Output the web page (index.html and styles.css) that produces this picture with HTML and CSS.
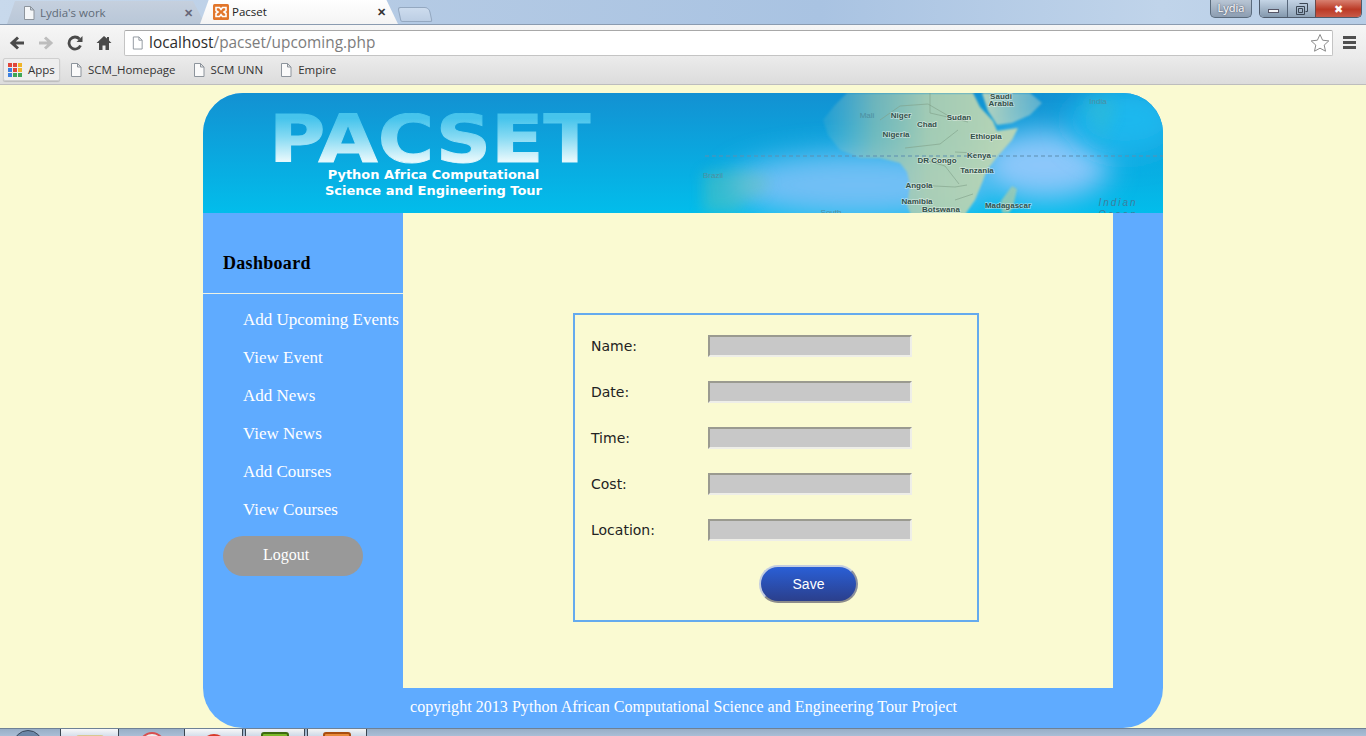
FILE: index.html
```html
<!DOCTYPE html>
<html lang="en">
<head>
<meta charset="utf-8">
<title>Pacset</title>
<link rel="stylesheet" href="styles.css">
</head>
<body>
<div class="browser">
  <div class="tabstrip">
    <div class="tab tab-inactive">
      <svg class="page-icon" viewBox="0 0 14 16"><path d="M2.5 1.500h6l3.500 3.500v9.500h-9.500z M8.500 1.500v3.500h3.500" fill="#f4f6f8" stroke="#8d949c"/></svg>
      <span class="tab-title">Lydia's work</span>
      <span class="tab-x">✕</span>
    </div>
    <div class="tab tab-active">
      <svg class="xampp" viewBox="0 0 16 16"><rect width="16" height="16" rx="1.500" fill="#e2762b"/><path d="M3 3.500h3.500l1.500 2 1.500-2h3.500v3l-2 1.500 2 1.500v3h-3.500l-1.500-2-1.500 2h-3.500v-3l2-1.500-2-1.500z" fill="none" stroke="#fff" stroke-width="1.600"/></svg>
      <span class="tab-title tab-title-on">Pacset</span>
      <span class="tab-x tab-x-on">✕</span>
    </div>
    <div class="tab-new"></div>
    <div class="win-group">
      <div class="user-chip">Lydia</div>
      <div class="win-buttons">
        <div class="win-btn win-min"><span class="min-bar"></span></div>
        <div class="win-btn win-max"><svg viewBox="0 0 12 12" class="max-icon"><path d="M3.500 .5h8v8h-2 M.5 3.500h8v8h-8z M2.500 5.500h4v4h-4z" fill="none" stroke="#3b4654"/></svg></div>
        <div class="win-btn win-close">✖</div>
      </div>
    </div>
  </div>
  <div class="toolbar">
    <svg class="nav" viewBox="0 0 16 16"><path d="M15 8H4M9 2.500L3 8l6 5.500" fill="none" stroke="#4a4a4a" stroke-width="3"/></svg>
    <svg class="nav" viewBox="0 0 16 16"><path d="M1 8h11M7 2.500L13 8l-6 5.500" fill="none" stroke="#bdbdbd" stroke-width="3"/></svg>
    <svg class="nav" viewBox="0 0 16 16"><path d="M13.500 10.500A6 6 0 1 1 12.500 4" fill="none" stroke="#4a4a4a" stroke-width="2.800"/><path d="M9.500 7h6V1z" fill="#4a4a4a"/></svg>
    <svg class="nav" viewBox="0 0 16 16"><path d="M8 1L0.500 8H3v7h3.500v-4.500h3V15H13V8h2.500L13 5.500V2h-2v1.500z" fill="#4a4a4a"/></svg>
    <div class="omnibox">
      <svg class="page-icon omni-icon" viewBox="0 0 14 16"><path d="M2.500 1.500h6l3.500 3.500v9.500h-9.500z M8.500 1.500v3.500h3.500" fill="#fff" stroke="#8d949c"/></svg>
      <span class="url"><span class="url-host">localhost</span>/pacset/upcoming.php</span>
      <svg class="star" viewBox="0 0 20 20"><path d="M10 1.500l2.600 5.700 6.200.7-4.600 4.200 1.300 6.100L10 15.200l-5.500 3 1.300-6.100L1.200 7.900l6.200-.7z" fill="#fff" stroke="#8a8a8a"/></svg>
    </div>
    <div class="menu"><span></span><span></span><span></span></div>
  </div>
  <div class="bookmarks">
    <div class="bm-apps">
      <div class="apps-grid">
        <i class="r"></i><i class="r"></i><i class="y"></i>
        <i class="b"></i><i class="r"></i><i class="y"></i>
        <i class="b"></i><i class="g"></i><i class="g"></i>
      </div>
      <span>Apps</span>
    </div>
    <div class="bm"><svg class="page-icon" viewBox="0 0 14 16"><path d="M2.500 1.500h6l3.500 3.500v9.500h-9.500z M8.500 1.500v3.500h3.500" fill="#fafafa" stroke="#8d949c"/></svg>SCM_Homepage</div>
    <div class="bm"><svg class="page-icon" viewBox="0 0 14 16"><path d="M2.500 1.500h6l3.500 3.500v9.500h-9.500z M8.500 1.500v3.500h3.500" fill="#fafafa" stroke="#8d949c"/></svg>SCM UNN</div>
    <div class="bm"><svg class="page-icon" viewBox="0 0 14 16"><path d="M2.500 1.500h6l3.500 3.500v9.500h-9.500z M8.500 1.500v3.500h3.500" fill="#fafafa" stroke="#8d949c"/></svg>Empire</div>
  </div>
</div>

<div class="page">
  <div class="site">
    <header class="banner">
      <svg class="map" viewBox="203 93 960 120" preserveAspectRatio="none">
        <defs>
          <filter id="soft" x="-40%" y="-60%" width="180%" height="220%"><feGaussianBlur stdDeviation="14"/></filter>
          <filter id="softer" x="-30%" y="-30%" width="160%" height="160%"><feGaussianBlur stdDeviation="7"/></filter>
          <filter id="edge" x="-10%" y="-10%" width="120%" height="120%"><feGaussianBlur stdDeviation="1"/></filter>
          <linearGradient id="land" gradientUnits="userSpaceOnUse" x1="820" x2="1000" y1="0" y2="0">
            <stop offset="0" stop-color="#8cc4c4" stop-opacity=".1"/>
            <stop offset=".3" stop-color="#9cc6b0" stop-opacity=".65"/>
            <stop offset=".6" stop-color="#aecfb2" stop-opacity=".92"/>
            <stop offset="1" stop-color="#bcd6b4" stop-opacity=".95"/>
          </linearGradient>
          <linearGradient id="arabia" gradientUnits="userSpaceOnUse" x1="980" x2="1050" y1="0" y2="0">
            <stop offset="0" stop-color="#c3d8ba" stop-opacity=".95"/>
            <stop offset="1" stop-color="#b4d4cc" stop-opacity=".35"/>
          </linearGradient>
        </defs>
        <ellipse cx="860" cy="185" rx="130" ry="32" fill="#72bff5" filter="url(#soft)"/>
        <ellipse cx="1045" cy="165" rx="65" ry="34" fill="#8cc7fa" filter="url(#soft)"/>
        <ellipse cx="1125" cy="120" rx="55" ry="35" fill="#1fb8ee" filter="url(#soft)"/>
        <path d="M703 172l40-2 27 8-6 14-20 10-8 11h-33z" fill="#6cc4ae" opacity=".4" filter="url(#softer)"/>
        <path d="M1083 98l30 0 3 14-8 14-5 16-10-20-10-14z" fill="#3fbcc4" opacity=".35" filter="url(#softer)"/>
        <path d="M823 120l12-15 12-12h126l7 14 13 14 4 10 21-3-6 12-15 17-10 13-5 13-7 17-9 13-3 15H920l-7-8-6-15 3-20-3-13-7-9-20-5-20 0-20-8-12-15z" fill="url(#land)" filter="url(#edge)"/>
        <path d="M982 93h48l12 10-12 12-18 8-15 2-9-14z" fill="url(#arabia)" filter="url(#edge)"/>
        <path d="M1012 186l5 3-4 18-4 6h-7l-1-12z" fill="#9dcbb0" opacity=".85" filter="url(#edge)"/>
        <path d="M880 120l20-14 28-2 24 14 16 4M905 148l35-4 18-14M925 160l20 6 14 18M915 185l40 2 12-2M930 93v20l22 5M955 152l20 1M955 200l18-6" fill="none" stroke="#7f9f88" stroke-width=".6"/>
        <path d="M705 156H1163" fill="none" stroke="#5c8eb0" stroke-width="1" stroke-dasharray="4 3"/>
        <g class="map-labels">
          <text x="1001" y="99" text-anchor="middle">Saudi</text>
          <text x="1001" y="106" text-anchor="middle">Arabia</text>
          <text x="867" y="118" text-anchor="middle" class="faint">Mali</text>
          <text x="901" y="118" text-anchor="middle">Niger</text>
          <text x="927" y="127" text-anchor="middle">Chad</text>
          <text x="959" y="120" text-anchor="middle">Sudan</text>
          <text x="896" y="137" text-anchor="middle">Nigeria</text>
          <text x="986" y="139" text-anchor="middle">Ethiopia</text>
          <text x="937" y="163" text-anchor="middle">DR Congo</text>
          <text x="979" y="158" text-anchor="middle">Kenya</text>
          <text x="977" y="173" text-anchor="middle">Tanzania</text>
          <text x="919" y="188" text-anchor="middle">Angola</text>
          <text x="917" y="204" text-anchor="middle">Namibia</text>
          <text x="941" y="212" text-anchor="middle">Botswana</text>
          <text x="1008" y="208" text-anchor="middle">Madagascar</text>
          <text x="1098" y="104" text-anchor="middle" class="faint">India</text>
          <text x="713" y="178" text-anchor="middle" class="faint">Brazil</text>
          <text x="831" y="215" text-anchor="middle" class="faint">South</text>
          <text x="1118" y="206" text-anchor="middle" class="ocean">Indian</text>
          <text x="1118" y="218" text-anchor="middle" class="ocean">Ocean</text>
        </g>
      </svg>
      <div class="logo">
        <div class="logo-word">PACSET</div>
        <div class="logo-sub">Python Africa Computational<br>Science and Engineering Tour</div>
      </div>
    </header>

    <div class="middle">
      <aside class="sidebar">
        <h2 class="side-title">Dashboard</h2>
        <nav class="side-nav">
          <a class="side-link">Add Upcoming Events</a>
          <a class="side-link">View Event</a>
          <a class="side-link">Add News</a>
          <a class="side-link">View News</a>
          <a class="side-link">Add Courses</a>
          <a class="side-link">View Courses</a>
        </nav>
        <a class="logout">Logout</a>
      </aside>
      <main class="content">
        <form class="event-form">
          <div class="field"><label class="field-label">Name:</label><div class="field-input"></div></div>
          <div class="field"><label class="field-label">Date:</label><div class="field-input"></div></div>
          <div class="field"><label class="field-label">Time:</label><div class="field-input"></div></div>
          <div class="field"><label class="field-label">Cost:</label><div class="field-input"></div></div>
          <div class="field"><label class="field-label">Location:</label><div class="field-input"></div></div>
          <div class="form-actions"><div class="save">Save</div></div>
        </form>
      </main>
    </div>

    <footer class="site-footer">copyright 2013 Python African Computational Science and Engineering Tour Project</footer>
  </div>
</div>

<div class="taskbar">
  <div class="orb"></div>
  <div class="task task-a"><i class="ti ti-folder"></i></div>
  <div class="task task-b"><i class="ti ti-ring"></i></div>
  <div class="task task-a"><i class="ti ti-red"></i></div>
  <div class="task task-c"><i class="ti ti-green"></i></div>
  <div class="task task-c"><i class="ti ti-orange"></i></div>
</div>
</body>
</html>
```
FILE: styles.css
```css
* { box-sizing: border-box; }
html, body { margin: 0; height: 736px; overflow: hidden; }
body { background: #fafad2; font-family: "Liberation Serif", serif; display: flex; flex-direction: column; }

/* Browser frame */
.browser { height: 85px; flex: none; font-family: "Open Sans", "Liberation Sans", sans-serif; background: #e4e4e4; }
.tabstrip { height: 25px; display: flex; align-items: flex-end; padding-left: 7px; background: linear-gradient(90deg, #c8d9ec 0%, #b4cae4 30%, #a9c3e2 60%, #c0d4ea 85%, #b7cde6 100%); border-bottom: 1px solid #8a9bb0; }
.tab { height: 23px; width: 198px; display: flex; align-items: center; margin-right: -5px; clip-path: polygon(0 100%, 8px 0, 186px 0, 198px 100%); padding-left: 15px; flex: none; }
.tab-inactive { background: linear-gradient(#c5d0de, #b9c7d8); }
.tab-active { background: linear-gradient(#fff, #f4f4f4); height: 25px; padding-left: 13px; width: 198px; clip-path: polygon(0 100%, 9px 0, 186px 0, 198px 100%); position: relative; }
.page-icon { width: 14px; height: 16px; flex: none; }
.tab-title { font-size: 11.500px; color: #5f6b78; margin-left: 4px; width: 144px; }
.tab-title-on { font-size: 11.500px; color: #222; margin-left: 3px; width: 145px; }
.xampp { width: 16px; height: 16px; flex: none; }
.tab-x { font-size: 11px; color: #667; font-weight: bold; }
.tab-x-on { color: #333; }
.tab-new { width: 32px; height: 15px; margin: 0 0 2px 6px; background: linear-gradient(#cddcee, #bccee4); border: 1px solid #94a8c0; border-radius: 3px 5px 2px 2px; transform: skewX(12deg); }
.win-group { margin-left: auto; display: flex; align-self: flex-start; margin-right: 4px; }
.user-chip { width: 42px; height: 18px; border: 1px solid #5a6b7d; border-top: 0; border-radius: 0 0 5px 5px; background: linear-gradient(#b9c6d5, #8c9db1); font-size: 11px; line-height: 16px; text-align: center; color: #fff; text-shadow: 0 0 2px #334; margin-right: 7px; }
.win-buttons { display: flex; height: 18px; border: 1px solid #4e5b6b; border-top: 0; border-radius: 0 0 5px 5px; overflow: hidden; }
.win-btn { display: flex; align-items: center; justify-content: center; }
.win-min { width: 28px; background: linear-gradient(#c5d5e6, #8398ad); border-right: 1px solid #56667a; }
.min-bar { width: 11px; height: 4px; margin-top: 5px; background: #f4f6f8; border: 1px solid #556; }
.win-max { width: 27px; background: linear-gradient(#c3d3e5, #8ea2b6); }
.max-icon { width: 12px; height: 12px; }
.win-close { width: 46px; background: linear-gradient(#d88070, #bb3a26 55%, #c85a48); color: #fff; font-size: 11px; border-left: 1px solid #6a4a4a; }

.toolbar { height: 32px; display: flex; align-items: center; padding: 3px 8px 0 9px; background: linear-gradient(#f6f6f6, #ebebeb); }
.nav { width: 16px; height: 16px; margin-right: 13px; flex: none; }
.omnibox { flex: none; width: 1209px; height: 26px; margin-left: -1px; background: #fff; border: 1px solid #c4c4c4; border-top-color: #a8a8a8; border-radius: 2px; display: flex; align-items: center; padding: 0 2px 0 6px; }
.omni-icon { width: 13px; }
.url { font-size: 15.400px; color: #7d7d7d; margin-left: 5px; }
.url-host { color: #2d2d2d; }
.star { width: 20px; height: 20px; margin-left: auto; }
.menu { display: flex; flex-direction: column; gap: 2px; margin-left: 10px; }
.menu span { display: block; width: 13px; height: 3px; background: #505050; }

.bookmarks { height: 28px; padding: 0 0 2px 3px; display: flex; align-items: center; font-size: 11.500px; color: #333; background: linear-gradient(#ebebeb, #dcdcdc); border-bottom: 1px solid #bdbdbd; }
.bm-apps { width: 57px; height: 23px; display: flex; align-items: center; gap: 6px; padding-left: 4px; background: #eee; border: 1px solid #cfcfcf; border-radius: 2px; box-shadow: 0 1px 1px #bbb; margin-right: 9px; }
.apps-grid { display: grid; grid-template-columns: repeat(3, 4px); gap: 1px; }
.apps-grid i { width: 4px; height: 4px; display: block; }
.apps-grid .r { background: #e0463a; }
.apps-grid .y { background: #f0b428; }
.apps-grid .b { background: #3d80e0; }
.apps-grid .g { background: #3fa757; }
.bm { display: flex; align-items: center; gap: 5px; margin-right: 16px; }

/* Page */
.page { flex: 1; min-height: 0; padding-top: 8px; display: flex; justify-content: center; }
.site { width: 960px; height: 635px; background: #5fabff; border-radius: 40px; overflow: hidden; display: flex; flex-direction: column; }

.banner { height: 120px; flex: none; position: relative; background: linear-gradient(#1391d2, #02bdeb); overflow: hidden; }
.map { position: absolute; left: 0; top: 0; width: 100%; height: 100%; }
.map-labels text { font-family: "Liberation Sans", sans-serif; font-size: 8px; font-weight: bold; fill: #33504a; stroke: rgba(255,255,255,.45); stroke-width: 1.500px; paint-order: stroke; }
.map-labels .faint { fill: #4d8fa0; font-weight: normal; stroke: none; }
.map-labels .ocean { fill: #3c7f9e; font-size: 10px; font-weight: normal; font-style: italic; letter-spacing: 2px; stroke: none; }
.logo { position: relative; padding: 20px 0 0 66px; }
.logo-word { font-family: "DejaVu Sans", sans-serif; font-weight: bold; font-size: 66px; line-height: 54px; letter-spacing: 0; width: 276px; transform: scaleX(1.165); transform-origin: left center; background: linear-gradient(#46c4ec 10%, #86daf3 45%, #e6f8fc 88%); -webkit-background-clip: text; background-clip: text; color: transparent; -webkit-text-stroke: 1px transparent; }
.logo-sub { font-family: "DejaVu Sans", sans-serif; font-weight: bold; font-size: 13px; line-height: 16px; color: #fff; width: 329px; text-align: center; }

.middle { flex: 1; display: flex; min-height: 0; }
.sidebar { width: 200px; flex: none; display: flex; flex-direction: column; }
.side-title { margin: 0; height: 81px; padding: 39px 0 0 20px; font-size: 18px; letter-spacing: .3px; line-height: 22px; color: #000; font-weight: bold; border-bottom: 1px solid #eef2e4; }
.side-nav { display: flex; flex-direction: column; padding: 7px 0 0 40px; }
.side-link { height: 38px; font-size: 17px; line-height: 38px; color: #fff; white-space: nowrap; }
.logout { display: block; width: 140px; height: 40px; margin: 7px 0 0 20px; border-radius: 20px; background: #999; color: #fff; font-size: 16px; line-height: 38px; padding-left: 40px; }

.content { width: 710px; flex: none; background: #fafad2; padding: 100px 0 0 170px; }
.event-form { width: 406px; height: 309px; border: 2px solid #64aaee; padding: 20px 0 0 16px; font-family: "DejaVu Sans", sans-serif; }
.field { display: flex; align-items: center; height: 22px; margin-bottom: 24px; }
.field-label { width: 117px; font-size: 14px; color: #222; }
.field-input { width: 204px; height: 22px; background: #c8c8c8; border: 2px solid; border-color: #9a9a90 #eeeee8 #eeeee8 #9a9a90; }
.form-actions { padding: 0 0 0 168px; margin-top: 2px; }
.save { width: 99px; height: 38px; border-radius: 19px; background: linear-gradient(#2a5fd6, #2b3f8c); border: 2px solid; border-color: #c3cde0 #8a8f9e #8c8c8c #c3cde0; color: #fff; font-family: "Liberation Sans", sans-serif; font-size: 14px; line-height: 34px; text-align: center; }

.site-footer { height: 40px; flex: none; padding: 9px 0 0 207px; font-size: 16px; letter-spacing: .04px; line-height: 20px; color: #fff; white-space: nowrap; }

/* Taskbar */
.taskbar { height: 8px; flex: none; display: flex; background: linear-gradient(#98aec6, #a9bed6); border-top: 1px solid #6e8196; overflow: hidden; position: relative; }
.orb { width: 30px; height: 30px; border-radius: 50%; border: 1px solid #38475a; background: #6b87a8; margin: 1px 17px 0 13px; flex: none; }
.task { height: 8px; display: flex; justify-content: center; flex: none; border-left: 1px solid #3a4550; border-right: 1px solid #3a4550; }
.task-a { width: 59px; background: linear-gradient(#f8f8f8, #d0dcea); }
.task-b { width: 65px; background: none; border: 0; }
.task-c { width: 60px; margin-left: 2px; background: linear-gradient(#f4f4f4, #c8d6e6); }
.ti { display: block; width: 28px; height: 16px; border-radius: 3px 3px 0 0; }
.ti-folder { background: #d8c890; margin-top: 6px; }
.ti-ring { width: 26px; height: 26px; border-radius: 50%; border: 2px solid #d85050; background: #eee; margin-top: 3px; }
.ti-red { width: 26px; height: 26px; border-radius: 50%; background: #d83a2a; margin-top: 5px; }
.ti-green { background: #7ab82a; border: 2px solid #3d6a10; margin-top: 3px; }
.ti-orange { background: #e88a3a; border: 2px solid #a84d10; margin-top: 3px; }
```
